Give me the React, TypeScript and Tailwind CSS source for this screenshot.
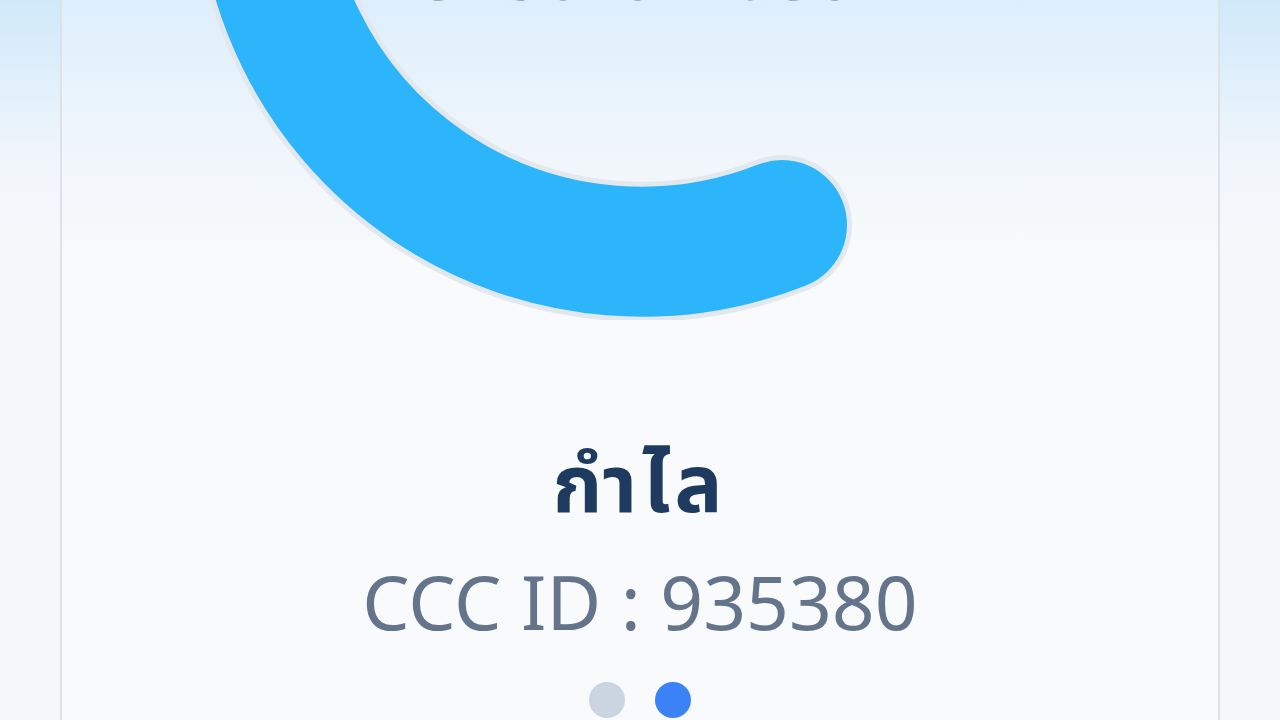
import React from "react";

function Gauge() {
  return (
    <div className="relative w-full h-[720px] -mt-[400px] shrink-0">
      <svg
        width="1160"
        height="720"
        viewBox="0 0 1160 720"
        className="absolute left-0 top-0"
      >
        <path
          d="M 200 270 A 380 380 0 0 0 720 625"
          fill="none"
          stroke="#e3e8ef"
          strokeWidth="140"
          strokeLinecap="round"
        />
        <path
          d="M 200 270 A 380 380 0 0 0 720 625"
          fill="none"
          stroke="#2db5fb"
          strokeWidth="130"
          strokeLinecap="round"
        />
      </svg>
      <div className="absolute left-0 right-0 top-[336px] text-center text-[64px] leading-[80px] text-[#5b6b80] font-['Noto_Sans','Noto_Sans_Thai',sans-serif] tracking-[10px]">
        Credit Rosa
      </div>
    </div>
  );
}

export default function App() {
  return (
    <div className="h-[720px] w-[1280px] overflow-hidden flex bg-[linear-gradient(to_bottom,#d0e9f9_0px,#e2f0fb_90px,#f1f6fb_160px,#f5f7fa_240px,#f5f7fa_720px)]">
      <div className="w-[60px] shrink-0" />
      <div className="flex-1 flex flex-col items-center border-x-2 border-[#dde2e9] bg-[linear-gradient(to_bottom,#ddeffc_0px,#e7f3fc_80px,#f1f6fb_160px,#f8fafb_260px,#f8fafb_720px)] overflow-hidden">
        <Gauge />
        <div className="mt-[118px] text-[80px] leading-[100px] font-bold tracking-[5px] text-[#1f3a5f] font-['Noto_Sans_Thai','Noto_Sans',sans-serif]">
          กำไล
        </div>
        <div className="mt-[18px] text-[75px] leading-[90px] text-[#64748b] font-['Noto_Sans',sans-serif]">
          CCC ID : 935380
        </div>
        <div className="mt-[36px] flex gap-[30px] shrink-0">
          <div className="w-[36px] h-[36px] rounded-full bg-[#cbd5e1]" />
          <div className="w-[36px] h-[36px] rounded-full bg-[#3b82f6]" />
        </div>
      </div>
      <div className="w-[60px] shrink-0" />
    </div>
  );
}
